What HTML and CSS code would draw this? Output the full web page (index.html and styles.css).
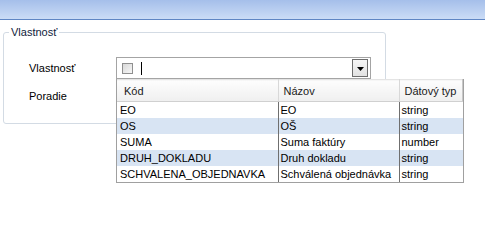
FILE: index.html
```html
<!DOCTYPE html>
<html>
<head>
<meta charset="utf-8">
<link rel="stylesheet" href="styles.css">
</head>
<body>
<div class="titlebar"></div>
<div class="group">
  <span class="legend">Vlastnosť</span>
  <div class="row row-first">
    <span class="label">Vlastnosť</span>
    <div class="combo">
      <span class="check"></span>
      <span class="caret"></span>
      <span class="dd-btn"><svg width="7" height="4" viewBox="0 0 7 4"><path d="M0 0H7L3.5 4Z" fill="#000"/></svg></span>
    </div>
  </div>
  <div class="row">
    <span class="label">Poradie</span>
  </div>
</div>
<div class="popup">
  <table class="grid">
    <thead>
      <tr><th class="c1">Kód</th><th class="c2">Názov</th><th class="c3">Dátový typ</th></tr>
    </thead>
    <tbody>
      <tr><td>EO</td><td>EO</td><td>string</td></tr>
      <tr class="alt"><td>OS</td><td>OŠ</td><td>string</td></tr>
      <tr><td>SUMA</td><td>Suma faktúry</td><td>number</td></tr>
      <tr class="alt"><td>DRUH_DOKLADU</td><td>Druh dokladu</td><td>string</td></tr>
      <tr><td>SCHVALENA_OBJEDNAVKA</td><td>Schválená objednávka</td><td>string</td></tr>
    </tbody>
  </table>
</div>
</body>
</html>
```
FILE: styles.css
```css
html, body {
  margin: 0;
  padding: 0;
  background: #fff;
}
body {
  font-family: "Liberation Sans", Arial, sans-serif;
  font-size: 11px;
  color: #000;
  width: 485px;
  height: 211px;
  overflow: hidden;
  position: relative;
}
.titlebar {
  height: 19px;
  background: linear-gradient(#a5bfea, #cbdcf6);
  border-bottom: 1px solid #5f86c4;
}
.group {
  position: relative;
  margin: 12px 99px 0 3px;
  height: 90px;
  border: 1px solid #d3dbe4;
  border-radius: 3px;
  box-sizing: content-box;
}
.legend {
  position: absolute;
  left: 5px;
  top: -8px;
  padding: 0 2px;
  background: #fff;
  line-height: 14px;
  color: #10223c;
}
.row {
  display: flex;
  align-items: center;
  padding-left: 25px;
  height: 22px;
}
.row-first {
  margin-top: 24px;
  margin-bottom: 6px;
}
.label {
  width: 87px;
}
.combo {
  position: relative;
  width: 248px;
  height: 20px;
  border: 1px solid #a4a4a4;
  display: flex;
  align-items: center;
  padding-left: 5px;
  box-sizing: content-box;
}
.check {
  width: 9px;
  height: 9px;
  border: 1px solid #8f8f8f;
  background: linear-gradient(135deg, #d8d8d8, #f7f7f7);
}
.caret {
  width: 1px;
  height: 13px;
  background: #000;
  margin-left: 8px;
}
.dd-btn {
  margin-left: auto;
  margin-right: 2px;
  width: 14px;
  height: 16px;
  border: 1px solid #6e6e6e;
  background: linear-gradient(#f6f6f6, #e2e2e2);
  display: flex;
  align-items: center;
  justify-content: center;
}
.dd-btn svg { display: block; margin-top: 1px; }
.popup {
  position: absolute;
  left: 116px;
  top: 79px;
  width: 346px;
  border: 1px solid #a0a0a0;
  border-top: none;
  background: #fff;
}
.grid {
  border-collapse: collapse;
  width: 100%;
  table-layout: fixed;
}
.grid th {
  height: 22px;
  padding: 0 0 0 5px;
  text-align: left;
  font-weight: normal;
  background: linear-gradient(#fdfdfd, #efefef);
  border-right: 1px solid #d8d8d8;
  border-bottom: 1px solid #d0d0d0;
  border-top: 1px solid #e4e4e4;
  color: #1a1a1a;
  box-sizing: border-box;
}
.grid th.c1 { width: 161px; padding-left: 7px; }
.grid th.c2 { width: 121px; }
.grid th.c3 { border-right: 1px solid #c8c8c8; }
.grid td {
  height: 16px;
  padding: 0 0 0 2px;
  line-height: 16px;
  border-left: 1px solid #6f6f6f;
  white-space: nowrap;
  overflow: hidden;
  box-sizing: border-box;
}
.grid td:first-child { border-left: none; padding-left: 3px; }
.grid tr.alt td { background: #d8e4f3; }
```
